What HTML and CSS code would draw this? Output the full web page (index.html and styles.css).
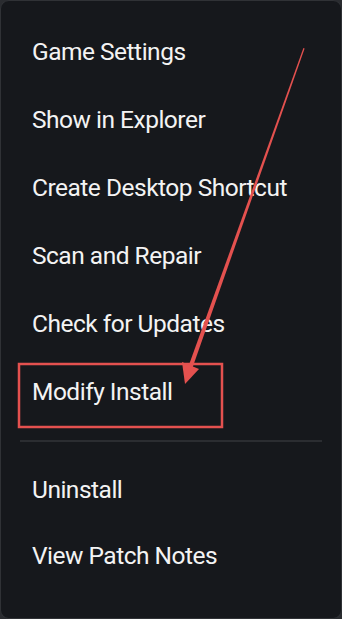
FILE: index.html
```html
<!DOCTYPE html>
<html>
<head>
<meta charset="utf-8">
<link rel="stylesheet" href="styles.css">
</head>
<body>
<div class="panel">
  <ul class="menu">
    <li class="item">Game Settings</li>
    <li class="item">Show in Explorer</li>
    <li class="item">Create Desktop Shortcut</li>
    <li class="item">Scan and Repair</li>
    <li class="item">Check for Updates</li>
    <li class="item">Modify Install</li>
  </ul>
  <div class="divider"></div>
  <ul class="menu menu-bottom">
    <li class="item">Uninstall</li>
    <li class="item">View Patch Notes</li>
  </ul>
  <svg class="annotation" width="342" height="619" viewBox="0 0 342 619">
    <rect x="19" y="364" width="203" height="63" fill="none" stroke="#e4514f" stroke-width="2.5"/>
    <polygon points="303.4,48 304.6,48.4 192.2,368.5 188.2,367" fill="#e4514f"/>
    <polygon points="185,384 199,369 182,362" fill="#e4514f"/>
  </svg>
</div>
</body>
</html>
```
FILE: styles.css
```css
html, body {
  margin: 0;
  padding: 0;
  background: #2a2c30;
}
body {
  width: 342px;
  height: 619px;
  overflow: hidden;
}
.panel {
  position: relative;
  box-sizing: border-box;
  width: 342px;
  height: 619px;
  background: #16181c;
  border: 1px solid #303236;
  border-radius: 9px;
  padding-top: 16px;
  font-family: Roboto, "Noto Sans", sans-serif;
  color: #f3f3f3;
}
.menu {
  list-style: none;
  margin: 0;
  padding: 0;
}
.item {
  height: 68px;
  display: flex;
  align-items: center;
  padding-left: 31px;
  font-size: 24.5px;
  letter-spacing: -0.5px;
}
.divider {
  height: 2px;
  background: #2b2d31;
  margin: 15px 19px 14px 19px;
}
.menu-bottom .item {
  height: 66px;
}
.annotation {
  position: absolute;
  left: -1px;
  top: -1px;
  pointer-events: none;
}
```
